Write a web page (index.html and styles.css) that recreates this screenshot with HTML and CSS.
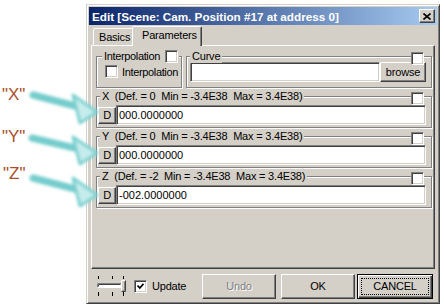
FILE: index.html
```html
<!DOCTYPE html>
<html lang="en">
<head>
  <meta charset="UTF-8" />
  <title>Edit - Cam. Position</title>
  <link rel="stylesheet" href="styles.css">
</head>
<body>
<div class="window">
  <div class="titlebar">
    <span class="title">Edit [Scene: Cam. Position #17 at address 0]</span>
    <span class="btn close"><svg width="8" height="7" viewBox="0 0 8 7"><path d="M0.5 0.5 L7.5 6.5 M7.5 0.5 L0.5 6.5" stroke="#000" stroke-width="1.6"/></svg></span>
  </div>

  <div class="sheet">
    <div class="tabs">
      <div class="tab">Basics</div>
      <div class="tab active">Parameters</div>
    </div>

    <div class="panel">
      <div class="row">
        <div class="group interp">
          <div class="legend">Interpolation<span class="check gap"></span></div>
          <div class="group-body">
            <span class="check"></span><span>Interpolation</span>
          </div>
        </div>
        <div class="group curve">
          <div class="legend">Curve</div>
          <span class="check corner"></span>
          <div class="group-body">
            <div class="field"></div>
            <span class="btn browse">browse</span>
          </div>
        </div>
      </div>

      <div class="group coord">
        <div class="legend">X&nbsp; (Def. = 0&nbsp; Min = -3.4E38&nbsp; Max = 3.4E38)</div>
        <span class="check corner"></span>
        <div class="group-body">
          <span class="btn dbtn">D</span>
          <div class="field">000.0000000</div>
        </div>
      </div>

      <div class="group coord">
        <div class="legend">Y&nbsp; (Def. = 0&nbsp; Min = -3.4E38&nbsp; Max = 3.4E38)</div>
        <span class="check corner"></span>
        <div class="group-body">
          <span class="btn dbtn">D</span>
          <div class="field">000.0000000</div>
        </div>
      </div>

      <div class="group coord">
        <div class="legend">Z&nbsp; (Def. = -2&nbsp; Min = -3.4E38&nbsp; Max = 3.4E38)</div>
        <span class="check corner"></span>
        <div class="group-body">
          <span class="btn dbtn">D</span>
          <div class="field">-002.0000000</div>
        </div>
      </div>
    </div>
  </div>

  <div class="footer">
    <svg class="slider" width="31" height="22" viewBox="0 0 31 22">
      <g stroke="#000" stroke-width="1">
        <path d="M2.5 1 V4 M16.5 1 V4 M27.5 1 V4 M2.5 17 V21 M16.5 17 V21 M27.5 17 V21"/>
      </g>
      <rect x="1" y="8" width="25" height="5" fill="#fff"/>
      <path d="M1.5 12.5 V8.5 H25.5" fill="none" stroke="#808080"/>
      <path d="M2.5 11.5 V9.5 H24.5" fill="none" stroke="#404040"/>
      <path d="M1.5 12.5 H25.5" fill="none" stroke="#fff"/>
      <rect x="25" y="5" width="5" height="12" fill="#d4d0c8"/>
      <path d="M25.5 16.5 V5.5 H29.5" fill="none" stroke="#fff"/>
      <path d="M25.5 16.5 H29.5 V5.5" fill="none" stroke="#404040"/>
      <path d="M26.5 15.5 H28.5 V6.5" fill="none" stroke="#808080"/>
    </svg>
    <span class="check checked"><svg width="7" height="7" viewBox="0 0 7 7"><path d="M0.5 2.5 L2.8 5 L6.5 0.8" fill="none" stroke="#000" stroke-width="1.7"/></svg></span>
    <span class="update">Update</span>
    <span class="btn push undo">Undo</span>
    <span class="btn push ok">OK</span>
    <span class="btn push cancel"><span class="focus">CANCEL</span></span>
  </div>
</div>

<svg class="notes" width="444" height="307" viewBox="0 0 444 307">
  <defs>
    <filter id="glow" x="-20%" y="-20%" width="140%" height="140%">
      <feGaussianBlur stdDeviation="1.6"/>
    </filter>
  </defs>
  <g filter="url(#glow)" stroke-linecap="round" stroke-linejoin="round">
    <path d="M33 95 L79 107" stroke="#74cccc" stroke-width="7"/>
    <polygon points="73,95 97,112 80,123" fill="#c6ecec" stroke="#7ad0d0" stroke-width="3"/>
    <path d="M32 138 L79 149" stroke="#74cccc" stroke-width="7"/>
    <polygon points="73,137 97,153 80,164" fill="#c6ecec" stroke="#7ad0d0" stroke-width="3"/>
    <path d="M33 178 L79 190" stroke="#74cccc" stroke-width="7"/>
    <polygon points="73,178 97,195 80,206" fill="#c6ecec" stroke="#7ad0d0" stroke-width="3"/>
  </g>
  <g class="quote">
    <text x="2" y="100">"X"</text>
    <text x="2" y="142">"Y"</text>
    <text x="3" y="179">"Z"</text>
  </g>
</svg>
</body>
</html>
```

FILE: styles.css
```css
* { box-sizing: border-box; }
body { margin: 0; width: 444px; height: 307px; overflow: hidden; background: #fff; position: relative;
  font-family: "Liberation Sans", Arial, sans-serif; font-size: 11px; letter-spacing: -0.2px; color: #000; }

/* window frame */
.window { width: 354px; height: 300px; margin: 4px 0 0 86px; padding: 2px; background: #d4d0c8;
  border: 1px solid; border-color: #d4d0c8 #404040 #404040 #d4d0c8;
  box-shadow: inset 1px 1px #fff, inset -1px -1px #808080; display: flex; flex-direction: column; }
.titlebar { height: 18px; display: flex; align-items: center; padding: 0 2px 0 3px;
  background: linear-gradient(to right, #0a246a, #a6caf0); }
.title { flex: 1; color: #fff; font-weight: bold; font-size: 11.7px; letter-spacing: 0; white-space: nowrap; }

/* raised 3d controls */
.btn { display: flex; align-items: center; justify-content: center; background: #d4d0c8;
  border: 1px solid; border-color: #fff #404040 #404040 #fff; box-shadow: inset -1px -1px #808080; }
.close { width: 16px; height: 14px; }

.sheet { margin: 0 2px; }
.tabs { height: 20px; display: flex; align-items: flex-end; padding-left: 2px; }
.tab { width: 41px; height: 17px; padding: 2px 0 0 5px; border: 1px solid; border-bottom: none;
  border-color: #fff #404040 transparent #fff; box-shadow: inset -1px 0 #808080;
  border-radius: 2px 2px 0 0; background: #d4d0c8; }
.tab.active { width: 70px; height: 20px; margin: 0 0 -1px -2px; padding: 2px 0 0 9px; position: relative; z-index: 1; }

.panel { height: 224px; padding: 10px 2px 0 4px; border: 1px solid; border-color: #fff #404040 #404040 #fff;
  box-shadow: inset -1px -1px #808080; display: flex; flex-direction: column; gap: 8px; }
.row { display: flex; gap: 4px; }

/* etched group boxes */
.group { position: relative; height: 32px; border: 1px solid #808080; box-shadow: inset 1px 1px #fff, 1px 1px #fff; }
.legend { position: absolute; top: -7px; left: 3px; padding: 0 2px; line-height: 13px; background: #d4d0c8;
  display: flex; align-items: center; white-space: nowrap; }
.interp { width: 86px; letter-spacing: -0.35px; }
.interp .legend { left: 5px; padding: 0 1px 0 2px; }
.curve { flex: 1; }
.group-body { display: flex; align-items: center; }
.interp .group-body { padding: 8px 0 0 8px; gap: 4px; }
.curve .group-body { padding: 5px 5px 0 3px; }
.coord .group-body { padding: 8px 5px 0 1px; }

.check { width: 13px; height: 13px; flex: none; background: #fff; display: flex; align-items: center; justify-content: center;
  border: 1px solid; border-color: #808080 #fff #fff #808080; box-shadow: inset 1px 1px #404040, inset -1px -1px #d4d0c8; }
.check.gap { margin-left: 5px; }
.check.corner { position: absolute; top: -5px; right: 7px; }

.field { flex: 1; height: 20px; padding: 0 2px; line-height: 18px; letter-spacing: 0; background: #fff;
  border: 1px solid; border-color: #808080 #fff #fff #808080; box-shadow: inset 1px 1px #404040, inset -1px -1px #d4d0c8; }
.browse { width: 46px; height: 20px; }
.dbtn { width: 18px; height: 17px; }

/* bottom bar */
.footer { flex: 1; display: flex; align-items: center; padding: 2px 4px 0 7px; }
.slider { flex: none; margin-right: 7px; }
.update { margin-left: 5px; }
.push { width: 74px; height: 25px; }
.undo { margin-left: auto; margin-right: 5px; color: #808080; text-shadow: 1px 1px #fff; }
.ok { margin-right: 2px; }
.cancel { width: 76px; padding: 3px; border: 1px solid #000;
  box-shadow: inset 1px 1px #fff, inset -1px -1px #404040, inset -2px -2px #808080; }
.focus { flex: 1; align-self: stretch; border: 1px dotted #000; display: flex; align-items: center; justify-content: center; }

/* annotation overlay */
.notes { position: absolute; top: 0; left: 0; pointer-events: none; }
.quote text { font-family: "Liberation Sans", Arial, sans-serif; font-size: 17px; letter-spacing: 0; fill: #a94f2c; }
```
